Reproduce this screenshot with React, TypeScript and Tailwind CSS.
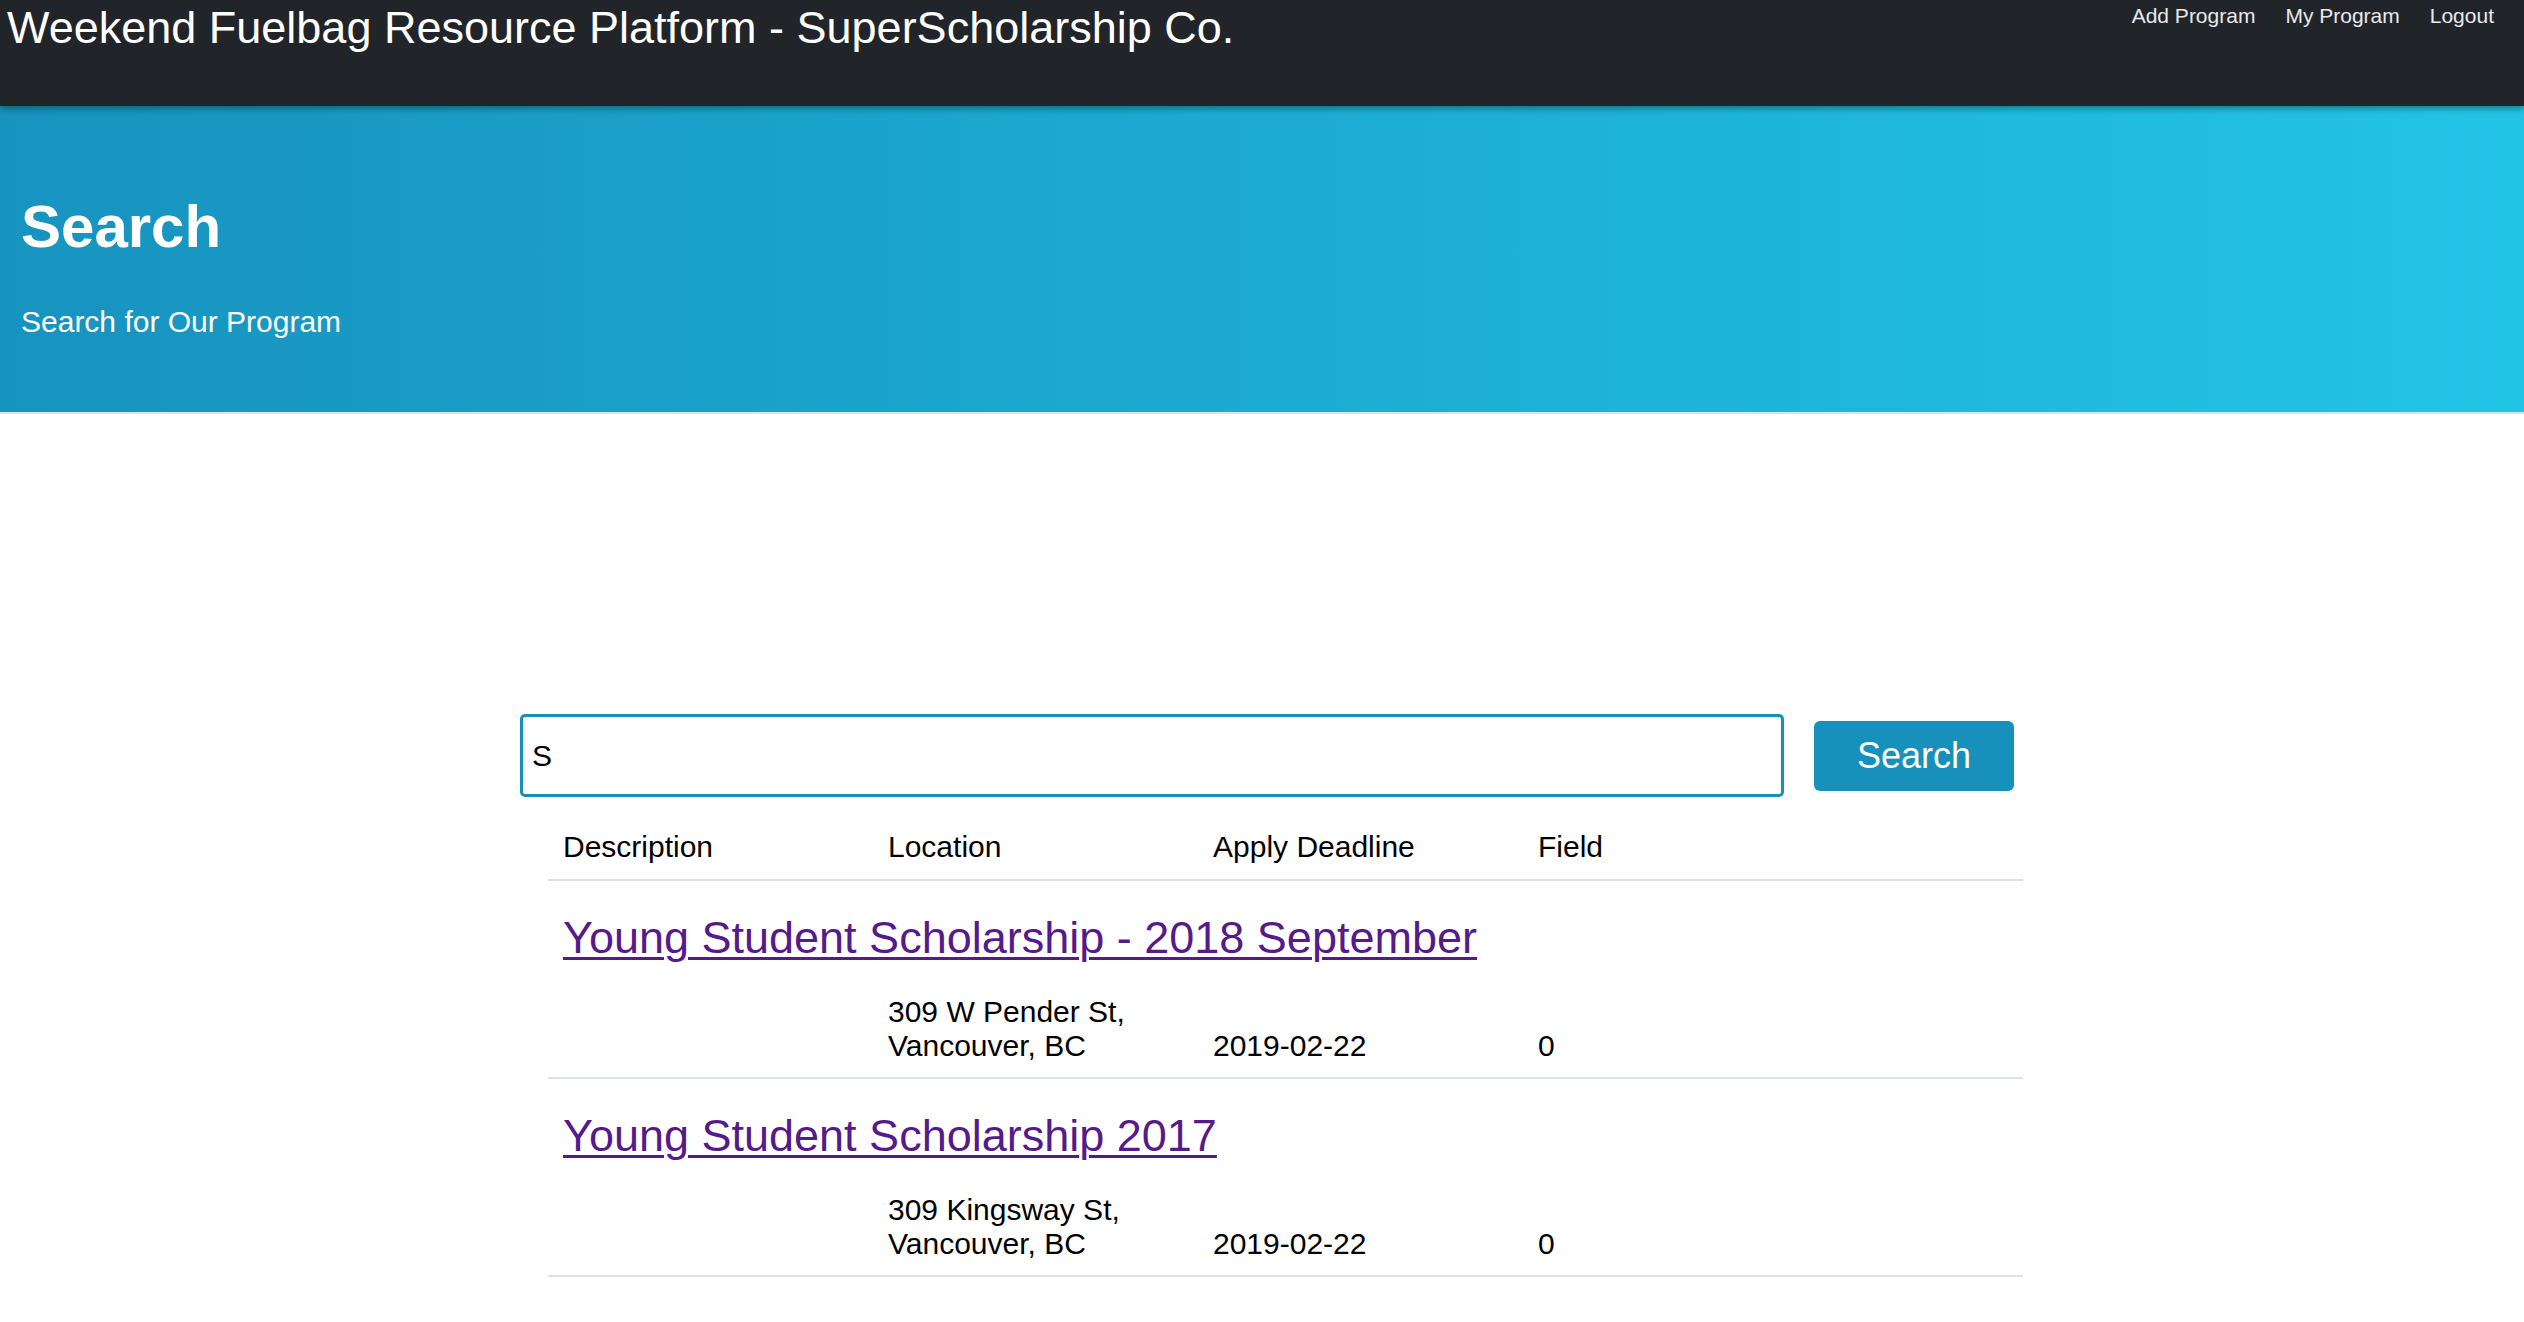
import React from "react";

const programs = [
  {
    title: "Young Student Scholarship - 2018 September",
    street: "309 W Pender St,",
    city: "Vancouver, BC",
    deadline: "2019-02-22",
    field: "0",
  },
  {
    title: "Young Student Scholarship 2017",
    street: "309 Kingsway St,",
    city: "Vancouver, BC",
    deadline: "2019-02-22",
    field: "0",
  },
];

const cols = "grid grid-cols-[325px_325px_325px_1fr]";

export default function App() {
  return (
    <div className="min-h-[1322px] bg-white font-['Liberation_Sans',Arial,sans-serif] text-black">
      {/* Navbar */}
      <nav className="relative z-10 flex h-[106px] items-start justify-between bg-[#212529] pt-[5px] pl-[7px] pr-[30px] shadow-[0_3px_6px_rgba(0,0,0,0.35)]">
        <div className="text-[45px] leading-[45px] text-white">
          Weekend Fuelbag Resource Platform - SuperScholarship Co.
        </div>
        <div className="flex gap-[30px] text-[21px] leading-[21px] text-white/90">
          <a href="#">Add Program</a>
          <a href="#">My Program</a>
          <a href="#">Logout</a>
        </div>
      </nav>

      {/* Hero */}
      <header className="h-[308px] border-b-2 border-[#dfe2e5] bg-linear-to-r from-[#1793bf] to-[#22c4e6] pl-[21px] pt-[91px] text-white">
        <h1 className="text-[60px] font-bold leading-[60px]">Search</h1>
        <p className="mt-[50px] text-[30px] leading-[30px]">Search for Our Program</p>
      </header>

      {/* Search form */}
      <main className="pt-[300px]">
        <form className="ml-[520px] flex items-center gap-[30px]" onSubmit={(e) => e.preventDefault()}>
          <input
            defaultValue="S"
            className="h-[83px] w-[1264px] rounded-[5px] border-[3px] border-[#1791bb] bg-white px-[9px] text-[30px] text-black outline-none"
          />
          <button className="h-[70px] w-[200px] rounded-[6px] bg-[#1791bb] text-[36px] leading-[36px] text-white">
            Search
          </button>
        </form>

        {/* Results */}
        <div className="ml-[548px] mt-[19px] w-[1475px] text-[30px]">
          <div className={`${cols} border-b-2 border-[#dee2e6] pt-[16px] pb-[17px] leading-[30px]`}>
            <div className="pl-[15px]">Description</div>
            <div className="pl-[15px]">Location</div>
            <div className="pl-[15px]">Apply Deadline</div>
            <div className="pl-[15px]">Field</div>
          </div>

          {programs.map((p) => (
            <div key={p.title} className="border-b-2 border-[#dee2e6] pt-[34px] pb-[14px]">
              <a
                href="#"
                className="ml-[15px] block w-fit text-[45px] leading-[45px] text-[#551a8b] underline decoration-[3px] underline-offset-[4px]"
              >
                {p.title}
              </a>
              <div className={`${cols} mt-[35px] items-end leading-[34px]`}>
                <div />
                <div className="pl-[15px]">
                  {p.street}
                  <br />
                  {p.city}
                </div>
                <div className="pl-[15px]">{p.deadline}</div>
                <div className="pl-[15px]">{p.field}</div>
              </div>
            </div>
          ))}
        </div>
      </main>
    </div>
  );
}
